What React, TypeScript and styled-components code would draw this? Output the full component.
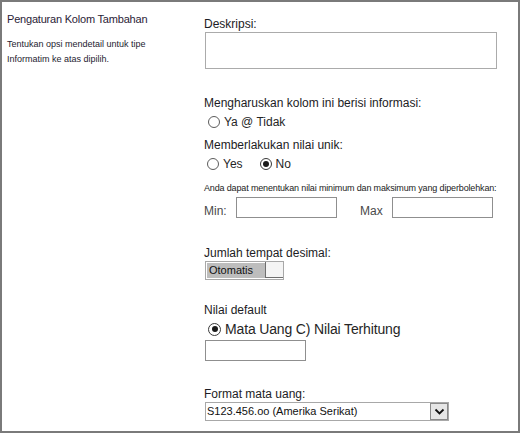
import styled, { createGlobalStyle } from "styled-components";

const GlobalStyle = createGlobalStyle`
    html, body {
        margin: 0;
        padding: 0;
        background: #ffffff;
    }
    * {
        box-sizing: border-box;
    }
`;

const Frame = styled.div`
    width: 520px;
    height: 433px;
    border: 2px solid #7a7a7a;
    display: flex;
    background: #ffffff;
    font-family: "Liberation Sans", Arial, sans-serif;
    color: #222222;
    overflow: hidden;
`;

const SideColumn = styled.div`
    width: 202px;
    flex-shrink: 0;
    padding: 10px 0 0 5px;
`;

const SideTitle = styled.div`
    font-size: 11px;
    line-height: 14px;
    letter-spacing: -0.2px;
    color: #2a2236;
`;

const SideText = styled.p`
    margin: 11px 0 0;
    font-size: 9px;
    line-height: 15px;
    color: #1e2230;
`;

const MainColumn = styled.div`
    flex: 1;
    display: flex;
    flex-direction: column;
    align-items: flex-start;
    padding-top: 15px;
`;

const Label = styled.div<{ $top: number }>`
    margin-top: ${p => p.$top}px;
    font-size: 12px;
    line-height: 14px;
    color: #1c1c24;
`;

const Hint = styled.div`
    margin-top: 12px;
    font-size: 9px;
    line-height: 11px;
    letter-spacing: -0.15px;
    color: #222222;
`;

const TextArea = styled.div`
    margin: 1px 0 0 1px;
    width: 292px;
    height: 37px;
    border: 1px solid #ababab;
    background: #ffffff;
`;

const TextInput = styled.div<{ $width?: number }>`
    width: ${p => p.$width ?? 101}px;
    height: 21px;
    border: 1px solid #8f8f8f;
    background: #ffffff;
`;

const RadioRow = styled.div<{ $top: number; $size?: number }>`
    margin-top: ${p => p.$top}px;
    display: flex;
    align-items: center;
    font-size: ${p => p.$size ?? 12}px;
    line-height: ${p => (p.$size ?? 12) + 2}px;
    letter-spacing: ${p => (p.$size ? "-0.15px" : "0")};
    color: #262626;
`;

const Option = styled.label<{ $lead: number }>`
    display: flex;
    align-items: center;
    gap: 4px;
    margin-left: ${p => p.$lead}px;
`;

const Radio = styled.span<{ $checked?: boolean; $size?: number }>`
    position: relative;
    width: ${p => p.$size ?? 12}px;
    height: ${p => p.$size ?? 12}px;
    border-radius: 50%;
    border: 1px solid ${p => (p.$checked ? "#3a3a3a" : "#5c5c5c")};
    background: #ffffff;
    flex-shrink: 0;

    &::after {
        content: "";
        display: ${p => (p.$checked ? "block" : "none")};
        position: absolute;
        left: 50%;
        top: 50%;
        width: 6px;
        height: 6px;
        margin: -3px 0 0 -3px;
        border-radius: 50%;
        background: #1a1a1a;
    }
`;

const RangeRow = styled.div`
    margin-top: 3px;
    display: flex;
    align-items: center;
`;

const RangeLabel = styled.span<{ $lead?: number }>`
    width: 32px;
    margin-left: ${p => p.$lead ?? 0}px;
    font-size: 12px;
    line-height: 14px;
    padding-top: 6px;
    color: #4a4a4a;
`;

const Spacer = styled.div<{ $top: number }>`
    margin-top: ${p => p.$top}px;
    margin-left: 1px;
`;

const DecimalSelect = styled.div`
    margin: 1px 0 0 1px;
    width: 79px;
    height: 19px;
    display: flex;
    border: 1px solid #a8a8a8;
    background: #ffffff;
    padding: 1px 0 1px 1px;
`;

const DecimalValue = styled.span`
    flex: 1;
    background: #bdbdbd;
    font-size: 11px;
    line-height: 15px;
    padding-left: 2px;
    color: #111111;
`;

const DecimalButton = styled.span`
    width: 18px;
    margin-top: -1px;
    border-left: 1px solid #6e6e6e;
    border-bottom: 1px solid #6e6e6e;
    background: #f4f4f4;
`;

const CurrencySelect = styled.div`
    margin: 1px 0 0 1px;
    width: 244px;
    height: 19px;
    display: flex;
    align-items: stretch;
    border: 1px solid #a8a8a8;
    background: #ffffff;
`;

const CurrencyValue = styled.span`
    flex: 1;
    font-size: 11px;
    line-height: 17px;
    padding-left: 1px;
    color: #111111;
`;

const CurrencyButton = styled.span`
    width: 18px;
    display: flex;
    align-items: center;
    justify-content: center;
    border: 1px solid #8a8a8a;
    background: #e6e6e6;
`;

function Chevron() {
    return (
        <svg width="11" height="8" viewBox="0 0 11 8">
            <path d="M1.5 1.5 L5.5 5.5 L9.5 1.5" fill="none" stroke="#111" strokeWidth="1.8" />
        </svg>
    );
}

function App() {
    return <>
        <GlobalStyle />
        <Frame>
            {/* ------------------[1. keterangan bagian]-------------------- */}
            <SideColumn>
                <SideTitle>Pengaturan Kolom Tambahan</SideTitle>
                <SideText>
                    Tentukan opsi mendetail untuk tipe
                    <br />
                    Informatim ke atas dipilih.
                </SideText>
            </SideColumn>

            {/* ------------------[2. isian kolom]-------------------- */}
            <MainColumn>
                <Label $top={0}>Deskripsi:</Label>
                <TextArea />

                <Label $top={27}>Mengharuskan kolom ini berisi informasi:</Label>
                <RadioRow $top={5}>
                    <Option $lead={4}>
                        <Radio />
                        Ya @ Tidak
                    </Option>
                </RadioRow>

                <Label $top={9}>Memberlakukan nilai unik:</Label>
                <RadioRow $top={5}>
                    <Option $lead={3}>
                        <Radio />
                        Yes
                    </Option>
                    <Option $lead={17}>
                        <Radio $checked />
                        No
                    </Option>
                </RadioRow>

                <Hint>Anda dapat menentukan nilai minimum dan maksimum yang diperbolehkan:</Hint>
                <RangeRow>
                    <RangeLabel>Min:</RangeLabel>
                    <TextInput />
                    <RangeLabel $lead={23}>Max</RangeLabel>
                    <TextInput />
                </RangeRow>

                <Label $top={28}>Jumlah tempat desimal:</Label>
                <DecimalSelect>
                    <DecimalValue>Otomatis</DecimalValue>
                    <DecimalButton />
                </DecimalSelect>

                <Label $top={23}>Nilai default</Label>
                <RadioRow $top={4} $size={14}>
                    <Option $lead={4}>
                        <Radio $checked $size={13} />
                        Mata Uang C) Nilai Terhitung
                    </Option>
                </RadioRow>
                <Spacer $top={3}>
                    <TextInput />
                </Spacer>

                <Label $top={26}>Format mata uang:</Label>
                <CurrencySelect>
                    <CurrencyValue>S123.456.oo (Amerika Serikat)</CurrencyValue>
                    <CurrencyButton>
                        <Chevron />
                    </CurrencyButton>
                </CurrencySelect>
            </MainColumn>
        </Frame>
    </>;
}

export default App;
